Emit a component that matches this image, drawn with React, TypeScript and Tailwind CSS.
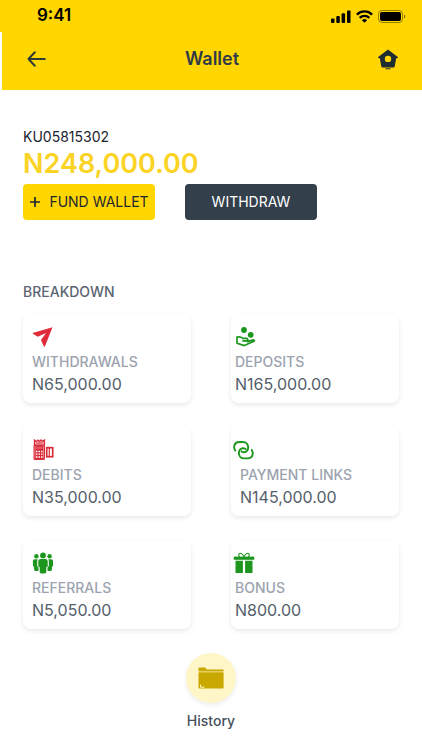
import React from 'react';

interface BreakdownItem {
  id: number;
  label: string;
  amount: string;
  icon: React.ReactNode;
  iconClass: string;
  textClass: string;
}

const PlaneIcon = () => (
  <svg width="22" height="22" viewBox="0 0 22 22" fill="#e02b3a">
    <path d="M20.500 1.200 1.400 6.700c-.7.2-.7.900-.1 1.300l4.500 2.800 8.200-3.900-5 7.200 2.600 6c.3.700 1.200.700 1.500 0z" />
  </svg>
);

const DepositIcon = () => (
  <svg width="22" height="22" viewBox="0 0 22 22" fill="#1c961c">
    <circle cx="9" cy="4" r="2.900" />
    <circle cx="15.700" cy="8.800" r="2.900" />
    <path
      d="M2 11v6.300l7.400 2.300 10-4.600c-.2-.9-1.200-1.300-2.200-.9l-4.700 1.500M2 11c2.200-.5 4.200-.1 6 1.400h3.500c1.400 0 1.800 2.300.2 2.500H8"
      fill="none"
      stroke="#1c961c"
      strokeWidth="1.700"
      strokeLinejoin="round"
      strokeLinecap="round"
    />
  </svg>
);

const DebitIcon = () => (
  <svg width="22" height="22" viewBox="0 0 22 22">
    <path d="M2.500 6.500V1l1.800 1.400L6 1l1.500 1.400L9 1l1.500 1.400L12.500 1v5.500" fill="#f4b8bd" stroke="#d92b38" strokeWidth="1.300" />
    <path d="M4.500 4h6" stroke="#d92b38" />
    <rect x="1.500" y="5.500" width="11.500" height="15.500" rx="1.500" fill="#d92b38" />
    <path d="M3 7v12.500M11.500 7v12.500" stroke="#f4b8bd" strokeWidth=".6" />
    <rect x="4" y="7.500" width="6.500" height="2.500" fill="#fff" opacity=".2" />
    <path d="M4 12.500h6.500M4 15.200h6.500M4 18h6.500" stroke="#fff" strokeWidth="1.300" strokeDasharray="1.500 1" />
    <rect x="14.700" y="8.700" width="6" height="9" fill="#fff" stroke="#d92b38" strokeWidth="1.700" />
    <path d="M17.300 9v8.500" stroke="#d92b38" strokeWidth="1.200" />
  </svg>
);

const LinkIcon = () => (
  <svg width="22" height="22" viewBox="0 0 22 22" fill="none" stroke="#1c961c" strokeWidth="1.900" strokeLinecap="round">
    <path d="M2.200 11.500C-.2 7.500 1.800 3 6.300 3H10c6.500 0 7 10.200.8 10.200-1.300 0-2.200-.3-2.400-.9" />
    <path d="M18.800 10.900c2.400 4 .4 8.500-4.100 8.500H11c-6.500 0-7-10.200-.8-10.200 1.300 0 2.200.3 2.400.9" />
  </svg>
);

const PeopleIcon = () => (
  <svg width="22" height="22" viewBox="0 0 22 22" fill="#1c961c">
    <circle cx="11" cy="3.400" r="2.900" />
    <circle cx="4.400" cy="4.300" r="2.200" />
    <circle cx="17.600" cy="4.300" r="2.200" />
    <path d="M8.500 7h5c1.400 0 2.200 1 2.200 2.300v4.900c0 .8-.9 1-1.400.6v5.200c0 1.200-1 1.500-3.300 1.500s-3.300-.3-3.300-1.500v-5.200c-.5.4-1.400.2-1.400-.6V9.300C6.300 8 7.100 7 8.500 7z" />
    <path d="M5.700 7.300H3C1.700 7.300.9 8.200.9 9.400v4.200c0 .7.6 1 1.200.8v3.400c0 1.200 2 1.700 4.400 1v-3.500c-.9-.3-1.300-.9-1.300-1.800V9.300c0-.8.200-1.400.5-2zM16.300 7.300H19c1.300 0 2.100.9 2.100 2.100v4.200c0 .7-.6 1-1.200.8v3.400c0 1.200-2 1.700-4.400 1v-3.500c.9-.3 1.300-.9 1.300-1.800V9.300c0-.8-.2-1.400-.5-2z" />
  </svg>
);

const GiftIcon = () => (
  <svg width="22" height="22" viewBox="0 0 22 22" fill="#1c961c">
    <path
      d="M11 4.800C9.800 2 7.900.8 6.500 1.500 5.200 2.200 5.600 4 6.800 4.800M11 4.800c1.200-2.800 3.100-4 4.500-3.300 1.300.7.9 2.500-.3 3.300"
      fill="none"
      stroke="#1c961c"
      strokeWidth="1.100"
    />
    <path d="M.8 4.600h20.400v3.200H.8z" />
    <path d="M2.500 8.800h7.400v12.200H2.500zM12.100 8.800h7.400v12.200h-7.400z" />
  </svg>
);

const FolderIcon = () => (
  <svg width="26" height="22" viewBox="0 0 26 22" fill="#c9a800">
    <path d="M.5 1.500c0-.6.400-1 1-1h5.700l1.500 2H25c.4 0 .6.200.6.600v1.400H.5z" />
    <path d="M.5 5.300h25.100v15.400c0 .5-.3.800-.8.800H1.300c-.5 0-.8-.3-.8-.8z" />
    <path d="M2.500 17.500v2.700h4" fill="none" stroke="#fff6c8" />
  </svg>
);

const breakdown: BreakdownItem[] = [
  { id: 1, label: 'WITHDRAWALS', amount: 'N65,000.00', icon: <PlaneIcon />, iconClass: 'pl-[9px]', textClass: 'pl-[9px]' },
  { id: 2, label: 'DEPOSITS', amount: 'N165,000.00', icon: <DepositIcon />, iconClass: 'pl-1', textClass: 'pl-1' },
  { id: 3, label: 'DEBITS', amount: 'N35,000.00', icon: <DebitIcon />, iconClass: 'pl-[9px]', textClass: 'pl-[9px]' },
  { id: 4, label: 'PAYMENT LINKS', amount: 'N145,000.00', icon: <LinkIcon />, iconClass: 'pl-0.5', textClass: 'pl-[9px]' },
  { id: 5, label: 'REFERRALS', amount: 'N5,050.00', icon: <PeopleIcon />, iconClass: 'pl-[9px]', textClass: 'pl-[9px]' },
  { id: 6, label: 'BONUS', amount: 'N800.00', icon: <GiftIcon />, iconClass: 'pl-0.5', textClass: 'pl-1' },
];

const StatusBar = () => (
  <div className="flex h-8 items-center justify-between bg-[#ffd600] pl-[37px] pr-4 text-black">
    <span className="text-[17px] font-semibold">9:41</span>
    <div className="flex items-center gap-[5px]">
      <svg width="20" height="13" viewBox="0 0 20 13">
        <rect x="0" y="8.500" width="3.500" height="4.500" rx="1" />
        <rect x="5.300" y="6" width="3.500" height="7" rx="1" />
        <rect x="10.600" y="3.300" width="3.500" height="9.700" rx="1" />
        <rect x="16" y="0.500" width="3.500" height="12.500" rx="1" />
      </svg>
      <svg width="17" height="13" viewBox="0 0 17 13" fill="none" stroke="#000" strokeWidth="2.300">
        <path d="M.9 4.600a10.800 10.800 0 0 1 15.200 0" />
        <path d="M3.700 7.800a6.900 6.900 0 0 1 9.600 0" />
        <path d="M8.500 12.800 5.900 10.300a3.700 3.700 0 0 1 5.200 0z" fill="#000" stroke="none" />
      </svg>
      <svg width="28" height="13" viewBox="0 0 28 13">
        <rect x="0.500" y="0.500" width="24" height="12" rx="3.500" fill="none" stroke="#000" strokeOpacity=".4" />
        <rect x="2" y="2" width="21" height="9" rx="2" />
        <path d="M26 4.500v4c.8-.3 1.300-1.100 1.300-2s-.5-1.700-1.300-2z" opacity=".45" />
      </svg>
    </div>
  </div>
);

const WalletHeader = () => (
  <header className="ml-0.5 flex h-[58px] items-center justify-between bg-[#ffd600] pb-1 pl-6 pr-6 text-[#2f3b47]">
    <button type="button" aria-label="Back">
      <svg width="20" height="18" viewBox="0 0 20 18" fill="none" stroke="#2f3b33" strokeWidth="2" strokeLinecap="round" strokeLinejoin="round">
        <path d="M18.800 9H2.500M8.800 2.200 2.500 9l6.300 6.800" />
      </svg>
    </button>
    <h1 className="text-lg font-semibold">Wallet</h1>
    <button type="button" aria-label="Home">
      <svg width="20" height="21" viewBox="0 0 20 21" fill="#1f2d33">
        <path
          fillRule="evenodd"
          d="M10 .5 19.800 8c.4.300.2 1-.3 1l-1.300.2-1.500 8.300c-.1.700-.5 1-1.200 1h-11c-.7 0-1.100-.3-1.200-1L1.800 9.200.500 9C0 9-.2 8.300.2 8zM10 6.700a3.200 3.200 0 1 0 0 6.400 3.200 3.200 0 0 0 0-6.400z"
        />
        <path d="M7.500 19.800h5" stroke="#1f2d33" />
      </svg>
    </button>
  </header>
);

const BreakdownCard = ({ item }: { item: BreakdownItem }) => (
  <div className="rounded-lg bg-white pb-[7px] pt-3 shadow-[0_2px_5px_rgba(0,0,0,0.09)]">
    <div className={item.iconClass}>{item.icon}</div>
    <div className={item.textClass}>
      <h3 className="mt-1 text-sm font-medium text-[#9ca3af]">{item.label}</h3>
      <p className="text-base text-[#555e6b]">{item.amount}</p>
    </div>
  </div>
);

const App = () => {
  return (
    <div className="bg-white pb-4 font-['Inter',sans-serif]">
      <StatusBar />
      <WalletHeader />
      <main className="px-[23px]">
        <section className="pt-[37px]">
          <p className="text-sm text-[#1c2430]">KU05815302</p>
          <p className="mt-px text-[27px] leading-8 font-semibold text-[#fad325]">N248,000.00</p>
          <div className="mt-1 flex gap-[30px]">
            <button type="button" className="flex h-9 w-[132px] items-center justify-center gap-2 rounded bg-[#ffd600] text-sm text-[#1f2630]">
              <svg width="12" height="12" viewBox="0 0 12 12" stroke="#1f2630" strokeWidth="1.700">
                <path d="M6 1v10M1 6h10" />
              </svg>
              FUND WALLET
            </button>
            <button type="button" className="h-9 w-[132px] rounded bg-[#333f4b] text-sm text-white">
              WITHDRAW
            </button>
          </div>
        </section>
        <section className="pt-[62px]">
          <h2 className="text-sm font-medium text-[#5b6572]">BREAKDOWN</h2>
          <div className="mt-3 grid grid-cols-2 gap-x-10 gap-y-6">
            {breakdown.map(item => (
              <BreakdownCard key={item.id} item={item} />
            ))}
          </div>
        </section>
      </main>
      <button type="button" className="mx-auto mt-6 flex flex-col items-center gap-2 text-sm font-medium text-[#45505c]">
        <span className="flex size-[50px] items-center justify-center rounded-full bg-[#fff6c8] shadow-[0_2px_5px_rgba(0,0,0,0.08)]">
          <FolderIcon />
        </span>
        History
      </button>
    </div>
  );
};

export default App;
